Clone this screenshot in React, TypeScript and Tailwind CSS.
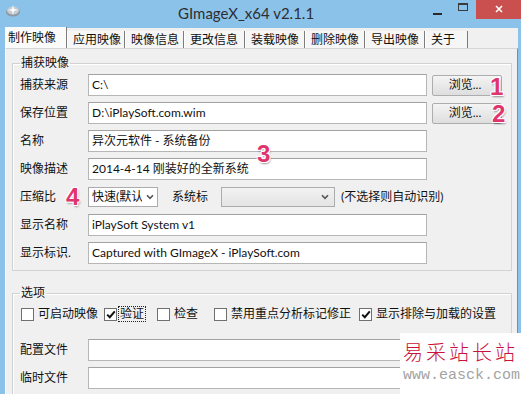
import { FC, ReactNode } from "react";

const Badge: FC<{ n: string; className: string }> = ({ n, className }) => (
    <span
        className={`absolute font-['Liberation_Sans',sans-serif] text-[24px] leading-none font-bold text-[#e0356c] [text-shadow:-1px_-1px_0_#fff,1px_-1px_0_#fff,-1px_1px_0_#fff,1px_1px_0_#fff,1px_2px_2px_rgba(0,0,0,0.4)] ${className}`}
    >
        {n}
    </span>
);

const Field: FC<{ value?: string; className?: string }> = ({
    value,
    className,
}) => (
    <div
        className={`flex h-[22px] items-center overflow-hidden border border-[#b6b6b6] border-t-[#a2a2a2] bg-white pl-[3px] whitespace-nowrap ${className ?? "w-[339px]"}`}
    >
        {value}
    </div>
);

const Chevron = () => (
    <svg width="8" height="6" viewBox="0 0 8 6">
        <path d="M1 1.2 L4 4.4 L7 1.2" fill="none" stroke="#555" strokeWidth="1.6" />
    </svg>
);

const Row: FC<{ label: string; children: ReactNode }> = ({ label, children }) => (
    <div className="flex h-[22px] items-center">
        <span className="w-[68px] shrink-0 leading-[14px]">{label}</span>
        {children}
    </div>
);

const BrowseButton = () => (
    <div className="ml-[5px] flex h-[21px] w-[70px] items-center justify-center rounded-[2px] border border-[#adadad] bg-linear-to-b from-[#f4f4f4] to-[#dedede] pr-[4px] leading-[14px]">
        浏览...
    </div>
);

const Check: FC<{ label: string; checked?: boolean; focused?: boolean; className: string }> = ({
    label,
    checked,
    focused,
    className,
}) => (
    <div className={`flex h-[16px] items-center ${className}`}>
        <span className="flex h-[13px] w-[13px] shrink-0 items-center justify-center border border-[#707070] bg-white">
            {checked && (
                <svg width="10" height="9" viewBox="0 0 10 9">
                    <path d="M1.2 4.6 L3.8 7.2 L8.8 1.4" fill="none" stroke="#111" strokeWidth="2" />
                </svg>
            )}
        </span>
        <span
            className={`ml-[2px] px-[1px] leading-[14px] whitespace-nowrap ${focused ? "outline-1 outline-dotted outline-[#222]" : "border border-transparent"}`}
        >
            {label}
        </span>
    </div>
);

const TABS = [
    { label: "应用映像", w: "w-[58px]" },
    { label: "映像信息", w: "w-[59px]" },
    { label: "更改信息", w: "w-[61px]" },
    { label: "装载映像", w: "w-[60px]" },
    { label: "删除映像", w: "w-[60px]" },
    { label: "导出映像", w: "w-[60px]" },
    { label: "关于", w: "w-[43px]" },
];

export default function App() {
    return (
        <div className="relative flex h-[394px] w-[521px] flex-col overflow-hidden bg-[#8bc2ea] font-['Lato','Noto_Sans_CJK_SC',sans-serif] text-[12px] text-[#111]">
            {/* title bar */}
            <div className="flex h-[28px] shrink-0 items-start">
                <svg className="mt-[3px] ml-[5px]" width="16" height="15" viewBox="0 0 16 15">
                    <ellipse cx="8" cy="9" rx="7" ry="4.5" fill="#8d99a3" />
                    <ellipse cx="8" cy="7.5" rx="6" ry="4" fill="#c5ccd2" />
                    <path d="M8 2 L9 6 L13 7 L9 8 L8 12 L7 8 L3 7 L7 6 Z" fill="#fff" />
                </svg>
                <span className="mt-[3px] ml-[157px] text-[15px] leading-[20px] text-[#2e2e2e]">
                    GImageX_x64 v2.1.1
                </span>
                <div className="flex-1" />
                <div className="flex h-[20px] w-[26px] justify-center pt-[13px]">
                    <span className="h-[2px] w-[9px] bg-[#2a2a2a]" />
                </div>
                <div className="flex h-[20px] w-[26px] justify-center pt-[3px]">
                    <span className="h-[8px] w-[10px] border border-t-2 border-[#3a3a3a]" />
                </div>
                <div className="flex h-[19px] w-[45px] justify-center bg-[#c9504f] pt-[5px]">
                    <svg width="8" height="8" viewBox="0 0 8 8">
                        <path d="M1 1 L7 7 M7 1 L1 7" stroke="#fff" strokeWidth="1.6" />
                    </svg>
                </div>
            </div>

            <div className="flex flex-1 pr-[3px] pl-[5px]">
                <div className="flex flex-1 flex-col bg-[#f0f0f0]">
                    {/* tabs */}
                    <div className="flex h-[20px] shrink-0 items-end">
                        <div className="flex h-[21px] w-[62px] items-center border-r border-r-[#7c7c7c] bg-[#fbfbfb] pl-[3px] leading-[14px]">
                            制作映像
                        </div>
                        {TABS.map((tab) => (
                            <div
                                key={tab.label}
                                className={`flex h-[17px] items-center border-r border-l border-r-[#7c7c7c] border-l-white bg-[#f6f6f6] pl-[5px] leading-[14px] ${tab.w}`}
                            >
                                {tab.label}
                            </div>
                        ))}
                    </div>

                    {/* tab page */}
                    <div className="flex-1 border-t border-r border-l border-t-[#d6d6d6] border-r-[#8a8a8a] border-l-white">
                        <fieldset className="mt-[7px] ml-[6px] w-[500px] border border-[#d2d2d2] px-[7px] pt-[4px] pb-[6px] shadow-[inset_1px_1px_0_#fff]">
                            <legend className="px-[1px] leading-[14px]">捕获映像</legend>
                            <div className="flex flex-col gap-[6px]">
                                <Row label="捕获来源">
                                    <Field value="C:\" />
                                    <BrowseButton />
                                </Row>
                                <Row label="保存位置">
                                    <Field value="D:\iPlaySoft.com.wim" />
                                    <BrowseButton />
                                </Row>
                                <Row label="名称">
                                    <Field value="异次元软件 - 系统备份" />
                                </Row>
                                <Row label="映像描述">
                                    <Field value="2014-4-14 刚装好的全新系统" />
                                </Row>
                                <Row label="压缩比">
                                    <div className="flex h-[20px] w-[70px] items-center border border-[#acacac] bg-white pl-[3px]">
                                        <span className="w-[50px] overflow-hidden leading-[14px] whitespace-nowrap">
                                            快速(默认)
                                        </span>
                                        <span className="ml-[4px]">
                                            <Chevron />
                                        </span>
                                    </div>
                                    <span className="ml-[14px] w-[36px] leading-[14px]">系统标</span>
                                    <div className="ml-[13px] flex h-[20px] w-[114px] items-center justify-end border border-[#acacac] bg-linear-to-b from-[#f2f2f2] to-[#e4e4e4] pr-[5px]">
                                        <Chevron />
                                    </div>
                                    <span className="ml-[6px] leading-[14px]">(不选择则自动识别)</span>
                                </Row>
                                <Row label="显示名称">
                                    <Field value="iPlaySoft System v1" />
                                </Row>
                                <Row label="显示标识.">
                                    <Field value="Captured with GImageX - iPlaySoft.com" />
                                </Row>
                            </div>
                        </fieldset>

                        <fieldset className="mt-[15px] ml-[6px] w-[500px] border border-[#d2d2d2] px-[7px] pt-[6px] pb-[6px] shadow-[inset_1px_1px_0_#fff]">
                            <legend className="px-[1px] leading-[14px]">选项</legend>
                            <div className="flex pl-[1px]">
                                <Check className="w-[83px]" label="可启动映像" />
                                <Check className="w-[53px]" label="验证" checked focused />
                                <Check className="w-[57px]" label="检查" />
                                <Check className="w-[145px]" label="禁用重点分析标记修正" />
                                <Check className="flex-1" label="显示排除与加载的设置" checked />
                            </div>
                            <div className="mt-[17px] flex flex-col gap-[6px]">
                                <Row label="配置文件">
                                    <Field className="w-[412px]" />
                                </Row>
                                <Row label="临时文件">
                                    <Field className="w-[412px]" />
                                </Row>
                            </div>
                        </fieldset>
                    </div>
                </div>
            </div>

            {/* annotations */}
            <Badge n="1" className="top-[75px] left-[490px]" />
            <Badge n="2" className="top-[102px] left-[492px]" />
            <Badge n="3" className="top-[142px] left-[257px]" />
            <Badge n="4" className="top-[185px] left-[66px]" />

            {/* watermark */}
            <div className="absolute top-[333px] left-[400px] flex h-[61px] w-[121px] flex-col bg-white pl-[3px]">
                <span className="mt-[7px] font-['Noto_Sans_CJK_SC',sans-serif] text-[20px] leading-[24px] font-light tracking-[3px] whitespace-nowrap text-[#c8143c]">
                    易采站长站
                </span>
                <span className="mt-[3px] font-['Liberation_Mono',monospace] text-[15px] leading-[18px] whitespace-nowrap text-[#a3a3a3]">
                    www.easck.com
                </span>
            </div>
        </div>
    );
}
